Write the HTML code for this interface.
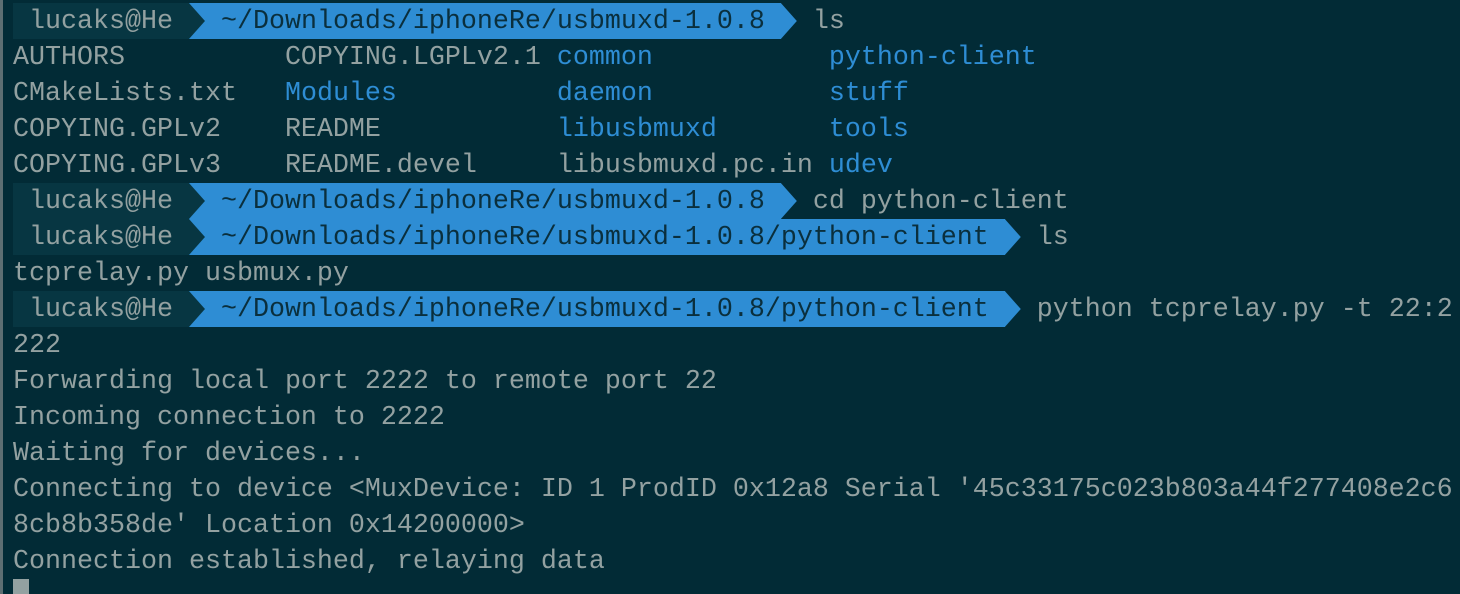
<!DOCTYPE html>
<html><head><meta charset="utf-8"><style>
html,body{margin:0;padding:0;}
body{width:1460px;height:594px;background:#022b36;overflow:hidden;position:relative;font-family:"Liberation Mono",monospace;font-size:26.667px;color:#93a1a1;}
.edge{position:absolute;left:0;top:0;width:3px;height:594px;background:#5d6e72;}
.row{position:absolute;left:13px;height:36px;line-height:38px;white-space:pre;}
.u{background:#073642;color:#93a1a1;display:inline-block;height:36px;vertical-align:top;}
.p{background:#2e8dd4;color:#0a2f3d;display:inline-block;height:36px;vertical-align:top;}
.a{display:inline-block;width:16px;height:36px;vertical-align:top;position:relative;}
.a i{position:absolute;left:0;top:0;width:16px;height:36px;clip-path:polygon(0 0,100% 50%,0 100%);}
.b{color:#2e8dd4;}
.cur{position:absolute;left:13px;top:579px;width:16px;height:15px;background:#93a1a1;}
</style></head><body>
<div class="edge"></div>
<div class="row" style="top:3px"><span class="u"> lucaks@He </span><span class="a" style="background:#2e8dd4"><i style="background:#073642"></i></span><span class="p"> ~/Downloads/iphoneRe/usbmuxd-1.0.8 </span><span class="a"><i style="background:#2e8dd4"></i></span> ls</div>
<div class="row" style="top:39px">AUTHORS          COPYING.LGPLv2.1 <span class="b">common</span>           <span class="b">python-client</span></div>
<div class="row" style="top:75px">CMakeLists.txt   <span class="b">Modules</span>          <span class="b">daemon</span>           <span class="b">stuff</span></div>
<div class="row" style="top:111px">COPYING.GPLv2    README           <span class="b">libusbmuxd</span>       <span class="b">tools</span></div>
<div class="row" style="top:147px">COPYING.GPLv3    README.devel     libusbmuxd.pc.in <span class="b">udev</span></div>
<div class="row" style="top:183px"><span class="u"> lucaks@He </span><span class="a" style="background:#2e8dd4"><i style="background:#073642"></i></span><span class="p"> ~/Downloads/iphoneRe/usbmuxd-1.0.8 </span><span class="a"><i style="background:#2e8dd4"></i></span> cd python-client</div>
<div class="row" style="top:219px"><span class="u"> lucaks@He </span><span class="a" style="background:#2e8dd4"><i style="background:#073642"></i></span><span class="p"> ~/Downloads/iphoneRe/usbmuxd-1.0.8/python-client </span><span class="a"><i style="background:#2e8dd4"></i></span> ls</div>
<div class="row" style="top:255px">tcprelay.py usbmux.py</div>
<div class="row" style="top:291px"><span class="u"> lucaks@He </span><span class="a" style="background:#2e8dd4"><i style="background:#073642"></i></span><span class="p"> ~/Downloads/iphoneRe/usbmuxd-1.0.8/python-client </span><span class="a"><i style="background:#2e8dd4"></i></span> python tcprelay.py -t 22:2</div>
<div class="row" style="top:327px">222</div>
<div class="row" style="top:363px">Forwarding local port 2222 to remote port 22</div>
<div class="row" style="top:399px">Incoming connection to 2222</div>
<div class="row" style="top:435px">Waiting for devices...</div>
<div class="row" style="top:471px">Connecting to device &lt;MuxDevice: ID 1 ProdID 0x12a8 Serial '45c33175c023b803a44f277408e2c6</div>
<div class="row" style="top:507px">8cb8b358de' Location 0x14200000&gt;</div>
<div class="row" style="top:543px">Connection established, relaying data</div>
<div class="cur"></div>
</body></html>
